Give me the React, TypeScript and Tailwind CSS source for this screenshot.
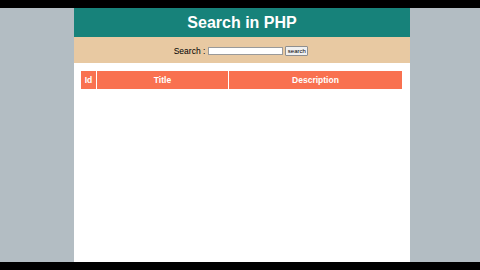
export default function App() {
  return (
    <div className="w-[480px] h-[270px] bg-black flex flex-col font-['Liberation_Sans',Arial,sans-serif]">
      <div className="h-[8px] shrink-0" />
      <div className="flex-1 bg-[#b3bdc3] flex">
        <div className="ml-[74px] w-[336px] bg-white flex flex-col">
          {/* Header */}
          <div className="h-[29px] bg-[#17827a] flex items-center justify-center">
            <h1 className="text-white font-bold text-[16px] leading-none">Search in PHP</h1>
          </div>

          {/* Search bar */}
          <div className="h-[26px] bg-[#e8c9a2] flex items-center justify-center pt-[2px] pr-[2px]">
            <span className="text-[8.5px] text-black mr-[3px]">Search :</span>
            <input
              type="text"
              className="w-[75px] h-[8px] bg-white border border-[#9a9a9a] outline-none mr-[2px]"
            />
            <button className="w-[23px] h-[10px] text-[6px] leading-none bg-[#f0f0f0] border border-[#8f8f8f] rounded-[1px] text-black">
              search
            </button>
          </div>

          {/* Table */}
          <div className="pt-[8px] pl-[7px] pr-[8px]">
            <div className="flex gap-[1px] h-[18px] text-white font-bold text-[8.5px]">
              <div className="w-[15px] bg-[#f97150] flex items-center justify-center">Id</div>
              <div className="w-[131px] bg-[#f97150] flex items-center justify-center">Title</div>
              <div className="flex-1 bg-[#f97150] flex items-center justify-center">Description</div>
            </div>
          </div>
        </div>
      </div>
      <div className="h-[8px] shrink-0" />
    </div>
  );
}
